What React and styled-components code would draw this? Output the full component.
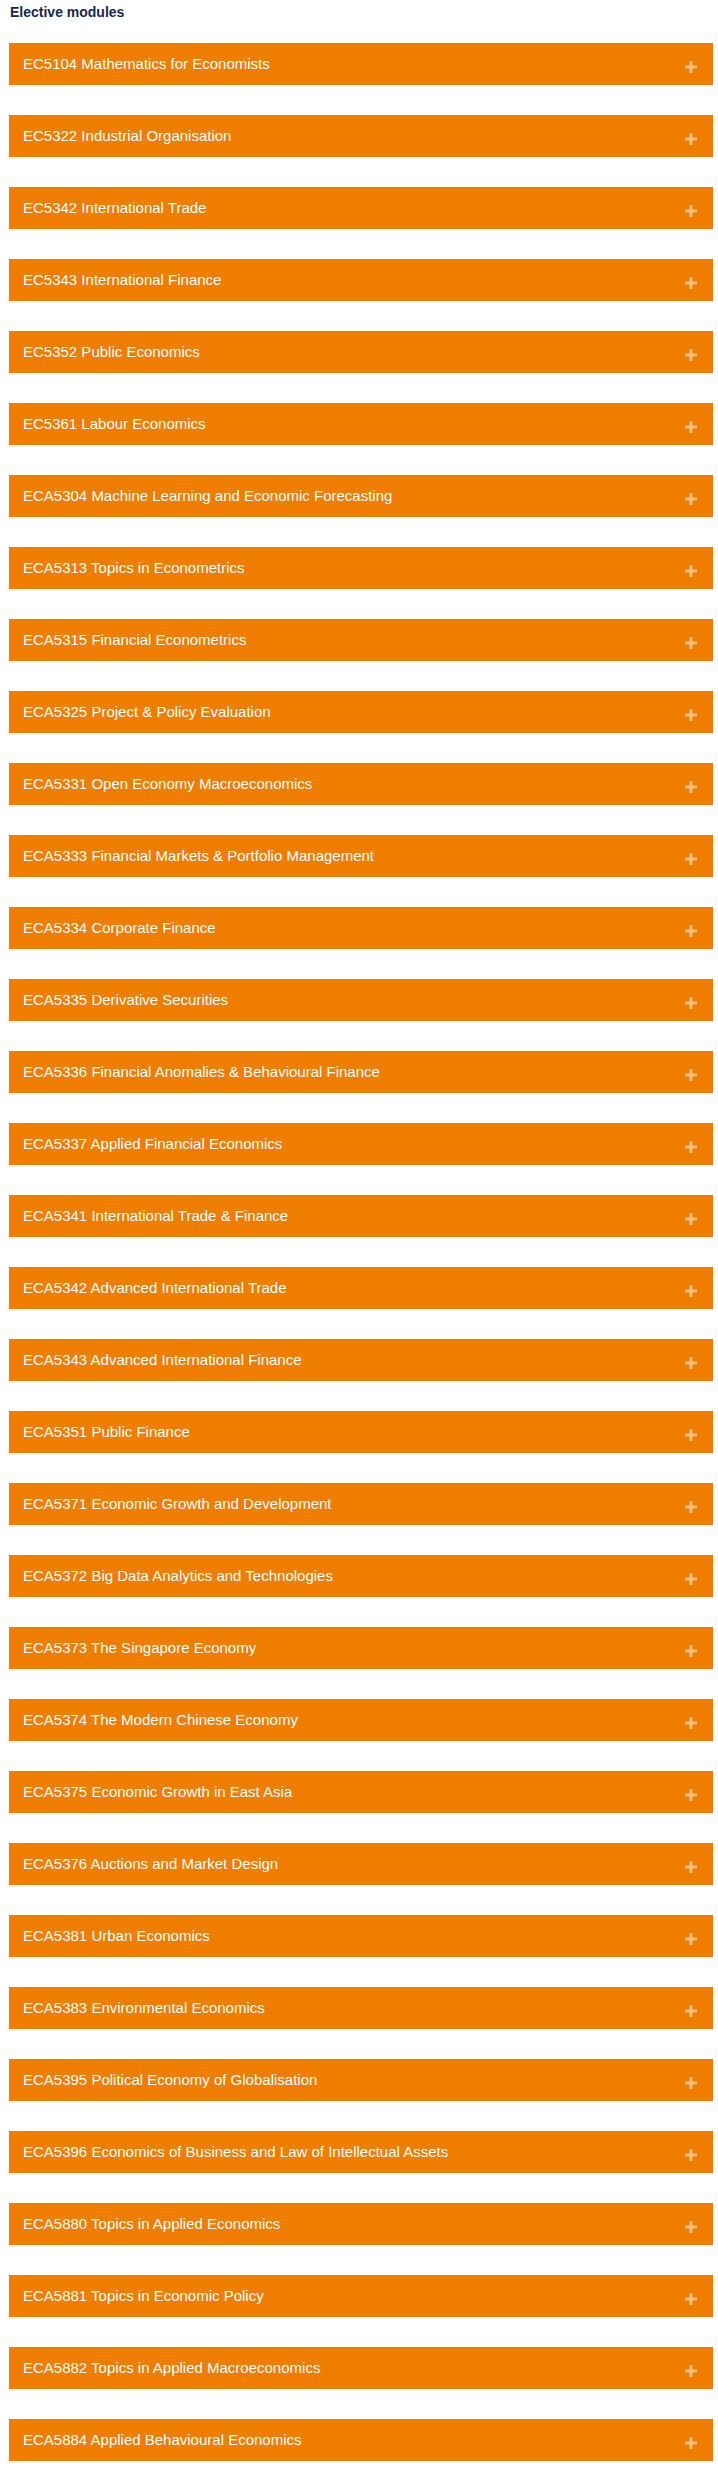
import React from 'react';
import styled, { createGlobalStyle } from 'styled-components';

const modules = [
  'EC5104 Mathematics for Economists',
  'EC5322 Industrial Organisation',
  'EC5342 International Trade',
  'EC5343 International Finance',
  'EC5352 Public Economics',
  'EC5361 Labour Economics',
  'ECA5304 Machine Learning and Economic Forecasting',
  'ECA5313 Topics in Econometrics',
  'ECA5315 Financial Econometrics',
  'ECA5325 Project & Policy Evaluation',
  'ECA5331 Open Economy Macroeconomics',
  'ECA5333 Financial Markets & Portfolio Management',
  'ECA5334 Corporate Finance',
  'ECA5335 Derivative Securities',
  'ECA5336 Financial Anomalies & Behavioural Finance',
  'ECA5337 Applied Financial Economics',
  'ECA5341 International Trade & Finance',
  'ECA5342 Advanced International Trade',
  'ECA5343 Advanced International Finance',
  'ECA5351 Public Finance',
  'ECA5371 Economic Growth and Development',
  'ECA5372 Big Data Analytics and Technologies',
  'ECA5373 The Singapore Economy',
  'ECA5374 The Modern Chinese Economy',
  'ECA5375 Economic Growth in East Asia',
  'ECA5376 Auctions and Market Design',
  'ECA5381 Urban Economics',
  'ECA5383 Environmental Economics',
  'ECA5395 Political Economy of Globalisation',
  'ECA5396 Economics of Business and Law of Intellectual Assets',
  'ECA5880 Topics in Applied Economics',
  'ECA5881 Topics in Economic Policy',
  'ECA5882 Topics in Applied Macroeconomics',
  'ECA5884 Applied Behavioural Economics',
];

function PlusIcon() {
  return (
    <svg width="12" height="12" viewBox="0 0 12 12">
      <path d="M6 0v12M0 6h12" stroke="#f8c080" strokeWidth="3" />
    </svg>
  );
}

export default function App() {
  return (
    <>
      <GlobalStyle />
      <Page>
        <Heading>Elective modules</Heading>
        <List>
          {modules.map((m) => (
            <Bar key={m}>
              <Title>{m}</Title>
              <Toggle>
                <PlusIcon />
              </Toggle>
            </Bar>
          ))}
        </List>
      </Page>
    </>
  );
}

const GlobalStyle = createGlobalStyle`
  body {
    margin: 0;
    background: #fff;
    font-family: "Liberation Sans", Arial, sans-serif;
  }
`;

const Page = styled.div`
  padding: 4px 5px 10px 9px;
`;

const Heading = styled.h3`
  margin: 0 0 22px 1px;
  font-size: 14px;
  line-height: 17px;
  font-weight: bold;
  color: #16294d;
`;

const List = styled.div`
  display: flex;
  flex-direction: column;
  gap: 30px;
`;

const Bar = styled.div`
  height: 42px;
  background: #ee7d00;
  display: flex;
  align-items: center;
  justify-content: space-between;
  padding: 0 16px 0 14px;
  box-sizing: border-box;
`;

const Title = styled.span`
  color: #fff;
  font-size: 15px;
  line-height: 18px;
`;

const Toggle = styled.span`
  display: flex;
  margin-top: 6px;
`;
